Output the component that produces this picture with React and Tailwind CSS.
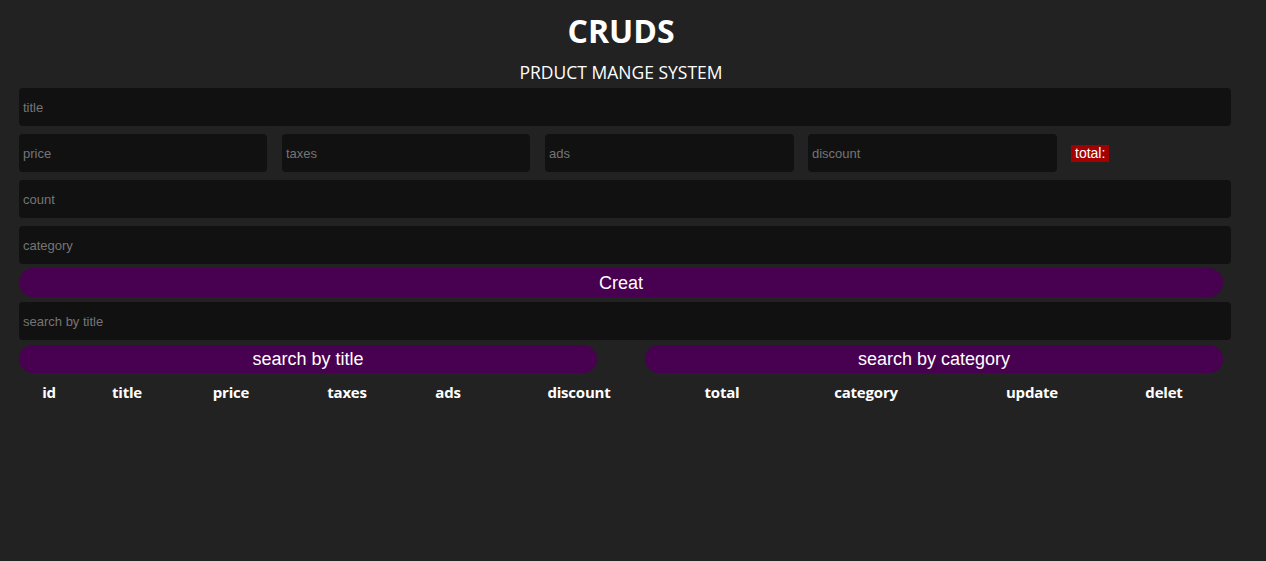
import React, { useState } from 'react';

const inputCls =
    'block h-[38px] bg-[#111111] rounded-[4px] px-[4px] text-[13px] text-white placeholder-[#757575] outline-none font-["Liberation_Sans",Arial,sans-serif]';

const columns = [
    { label: 'id', w: 'w-[60px]' },
    { label: 'title', w: 'w-[96px]' },
    { label: 'price', w: 'w-[112px]' },
    { label: 'taxes', w: 'w-[120px]' },
    { label: 'ads', w: 'w-[82px]' },
    { label: 'discount', w: 'w-[180px]' },
    { label: 'total', w: 'w-[106px]' },
    { label: 'category', w: 'w-[182px]' },
    { label: 'update', w: 'w-[150px]' },
    { label: 'delet', w: 'w-[114px]' },
];

const App = () => {
    const [title, setTitle] = useState('');

    return (
        <div className="min-h-[561px] bg-[#222222] text-white pl-[19px] pt-[10px]">
            {/* Header */}
            <div className="w-[1204px] text-center font-['Open_Sans','Noto_Sans',sans-serif]">
                <h1 className="text-[32px] font-bold leading-[42px]">CRUDS</h1>
                <p className="text-[17.5px] leading-[24px] mt-[8px]">PRDUCT MANGE SYSTEM</p>
            </div>

            {/* Inputs */}
            <div className="w-[1212px]">
                <input
                    className={`${inputCls} w-full mt-[4px]`}
                    placeholder="title"
                    value={title}
                    onChange={(e) => setTitle(e.target.value)}
                />
                <div className="flex items-center mt-[8px]">
                    <input className={`${inputCls} w-[248px]`} placeholder="price" />
                    <input className={`${inputCls} w-[248px] ml-[15px]`} placeholder="taxes" />
                    <input className={`${inputCls} w-[249px] ml-[15px]`} placeholder="ads" />
                    <input className={`${inputCls} w-[249px] ml-[14px]`} placeholder="discount" />
                    <span className="ml-[14px] bg-[#a30000] px-[4px] h-[17px] leading-[17px] text-[14px] font-['Liberation_Sans',Arial,sans-serif]">
                        total:
                    </span>
                </div>
                <input className={`${inputCls} w-full mt-[8px]`} placeholder="count" />
                <input className={`${inputCls} w-full mt-[8px]`} placeholder="category" />
            </div>

            <button className="block w-[1204px] h-[29px] mt-[4px] pt-[2px] rounded-full bg-[#480050] text-[18px] text-white font-['Liberation_Sans',Arial,sans-serif]">
                Creat
            </button>

            <input className={`${inputCls} w-[1212px] mt-[5px]`} placeholder="search by title" />

            {/* Search buttons */}
            <div className="flex w-[1204px] justify-between mt-[5px]">
                <button className="w-[578px] h-[28px] rounded-full bg-[#480050] text-[18px] text-white font-['Liberation_Sans',Arial,sans-serif]">
                    search by title
                </button>
                <button className="w-[578px] h-[28px] rounded-full bg-[#480050] text-[18px] text-white font-['Liberation_Sans',Arial,sans-serif]">
                    search by category
                </button>
            </div>

            {/* Table */}
            <table className="mt-[8px] border-collapse">
                <thead>
                    <tr>
                        {columns.map((c) => (
                            <th
                                key={c.label}
                                className={`${c.w} p-0 h-[22px] text-center text-[15px] font-bold font-['Open_Sans','Noto_Sans',sans-serif] tracking-[-0.2px]`}
                            >
                                {c.label}
                            </th>
                        ))}
                    </tr>
                </thead>
                <tbody></tbody>
            </table>
        </div>
    );
};

export default App;
